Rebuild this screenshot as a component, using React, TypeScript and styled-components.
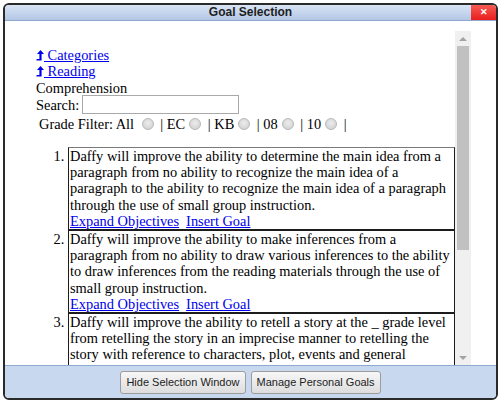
import React from 'react';
import styled, { createGlobalStyle } from 'styled-components';

const GlobalStyle = createGlobalStyle`
  html, body {
    margin: 0;
    padding: 0;
    background: #fff;
  }
  body {
    width: 500px;
    height: 402px;
    overflow: hidden;
  }
`;

const Dialog = styled.div`
  box-sizing: border-box;
  width: 495px;
  height: 397px;
  margin: 3px 0 0 3px;
  border: 2px solid #2a2a2a;
  border-radius: 6px;
  overflow: hidden;
  display: flex;
  flex-direction: column;
  background: #fff;
`;

const TitleBar = styled.div`
  display: grid;
  grid-template-columns: 25px 1fr 25px;
  height: 15px;
  background: linear-gradient(#d9e4f4, #b3c7e5);
  border-bottom: 1px solid #8ea7cf;
`;

const Title = styled.div`
  grid-column: 2;
  text-align: center;
  font: bold 12px/15px 'Liberation Sans', Arial, sans-serif;
  color: #1e1e1e;
`;

const CloseButton = styled.button`
  grid-column: 3;
  border: 0;
  padding: 0;
  margin: 0;
  background: linear-gradient(#f65a52, #e81e1e);
  color: #fff;
  font: bold 9px/15px 'Liberation Sans', Arial, sans-serif;
  cursor: pointer;
`;

const Body = styled.div`
  flex: 1;
  min-height: 0;
  display: flex;
  padding: 10px 25px 0 16px;
`;

const ScrollContent = styled.div`
  flex: 1;
  min-width: 0;
  overflow: hidden;
  padding: 16px 0 0 15px;
  font: 14.4px/16.3px 'Liberation Serif', 'Times New Roman', serif;
  color: #000;
`;

const NavLink = styled.a`
  display: block;
  color: #0000ee;
  text-decoration: none;
  width: max-content;
`;

const NavText = styled.span`
  text-decoration: underline;
`;

const SearchRow = styled.div`
  display: flex;
  align-items: center;
  gap: 3px;
  height: 18px;
`;

const SearchInput = styled.input`
  box-sizing: border-box;
  width: 157px;
  height: 19px;
  margin: 0;
  border: 1px solid #a9a9a9;
  padding: 0 2px;
`;

const FilterRow = styled.div`
  padding: 2px 0 0 3px;
  line-height: 17px;
`;

const Radio = styled.span`
  display: inline-block;
  box-sizing: border-box;
  width: 12px;
  height: 12px;
  margin: 0 3px 0 4px;
  vertical-align: -1px;
  border: 1px solid #b8b8b8;
  border-radius: 50%;
  background: radial-gradient(circle at 50% 40%, #ececec, #cdcdcd);
`;

const GoalList = styled.ol`
  margin: 14px 0 0;
  padding-left: 32px;
`;

const GoalItem = styled.li`
  border: 1px solid #1c1c1c;
  padding: 0 1px;
  line-height: 16.2px;
  &:first-child {
    border-top-color: #7a7a7a;
  }
`;

const ItemLinks = styled.div`
  display: flex;
  gap: 7px;
`;

const ItemLink = styled.a`
  color: #0000ee;
  text-decoration: underline;
`;

const Scrollbar = styled.div`
  width: 16px;
  display: flex;
  flex-direction: column;
  background: #f0f0f0;
`;

const ScrollArrow = styled.div<{ $down?: boolean }>`
  height: 15px;
  display: flex;
  align-items: center;
  justify-content: center;
  &::before {
    content: '';
    border-left: 4px solid transparent;
    border-right: 4px solid transparent;
    ${({ $down }) =>
      $down ? 'border-top: 4px solid #a3a3a3;' : 'border-bottom: 4px solid #a3a3a3;'}
  }
`;

const ScrollTrack = styled.div`
  flex: 1;
`;

const ScrollThumb = styled.div`
  margin: 0 2px;
  background: #c1c1c1;
`;

const Footer = styled.div`
  height: 32px;
  border-top: 1px solid #8eaad3;
  background: #c7d8ef;
  display: flex;
  justify-content: center;
  align-items: center;
  gap: 5px;
`;

const FooterButton = styled.button`
  box-sizing: border-box;
  height: 23px;
  display: flex;
  align-items: center;
  padding: 0 5px;
  border: 1px solid #9c9c9c;
  border-radius: 3px;
  background: linear-gradient(#f7f7f7, #dddddd);
  font: 11px 'Liberation Sans', Arial, sans-serif;
  color: #222;
`;

const UpArrow: React.FC = () => (
  <svg width="8" height="11" viewBox="0 0 8 11" style={{ verticalAlign: '-1px' }}>
    <path d="M4.5 0 L8 4 L5.6 4 L5.6 10.5 L0.5 10.5 L0.5 9 L3.4 9 L3.4 4 L1 4 Z" fill="#0000ee" />
  </svg>
);

interface Goal {
  text: string;
}

const goals: Goal[] = [
  {
    text:
      'Daffy will improve the ability to determine the main idea from a paragraph from no ability to recognize the main idea of a paragraph to the ability to recognize the main idea of a paragraph through the use of small group instruction.',
  },
  {
    text:
      'Daffy will improve the ability to make inferences from a paragraph from no ability to draw various inferences to the ability to draw inferences from the reading materials through the use of small group instruction.',
  },
  {
    text:
      'Daffy will improve the ability to retell a story at the _ grade level from retelling the story in an imprecise manner to retelling the story with reference to characters, plot, events and general elements of the story through the use of small group instruction.',
  },
];

const grades = ['EC', 'KB', '08', '10'];

const App: React.FC = () => {
  const thumbHeight = 204;

  return (
    <>
      <GlobalStyle />
      <Dialog>
        <TitleBar>
          <Title>Goal Selection</Title>
          <CloseButton>✕</CloseButton>
        </TitleBar>
        <Body>
          <ScrollContent>
            <NavLink href="#">
              <UpArrow />
              <NavText> Categories</NavText>
            </NavLink>
            <NavLink href="#">
              <UpArrow />
              <NavText> Reading</NavText>
            </NavLink>
            <div>Comprehension</div>
            <SearchRow>
              Search:
              <SearchInput type="text" />
            </SearchRow>
            <FilterRow>
              Grade Filter: All <Radio />
              {grades.map((g) => (
                <React.Fragment key={g}>
                  {' | '}
                  {g}
                  <Radio />
                </React.Fragment>
              ))}
              {' |'}
            </FilterRow>
            <GoalList>
              {goals.map((goal, i) => (
                <GoalItem key={i}>
                  {goal.text}
                  <ItemLinks>
                    <ItemLink href="#">Expand Objectives</ItemLink>
                    <ItemLink href="#">Insert Goal</ItemLink>
                  </ItemLinks>
                </GoalItem>
              ))}
            </GoalList>
          </ScrollContent>
          <Scrollbar>
            <ScrollArrow />
            <ScrollTrack>
              <ScrollThumb style={{ height: thumbHeight }} />
            </ScrollTrack>
            <ScrollArrow $down />
          </Scrollbar>
        </Body>
        <Footer>
          <FooterButton>Hide Selection Window</FooterButton>
          <FooterButton>Manage Personal Goals</FooterButton>
        </Footer>
      </Dialog>
    </>
  );
};

export default App;
